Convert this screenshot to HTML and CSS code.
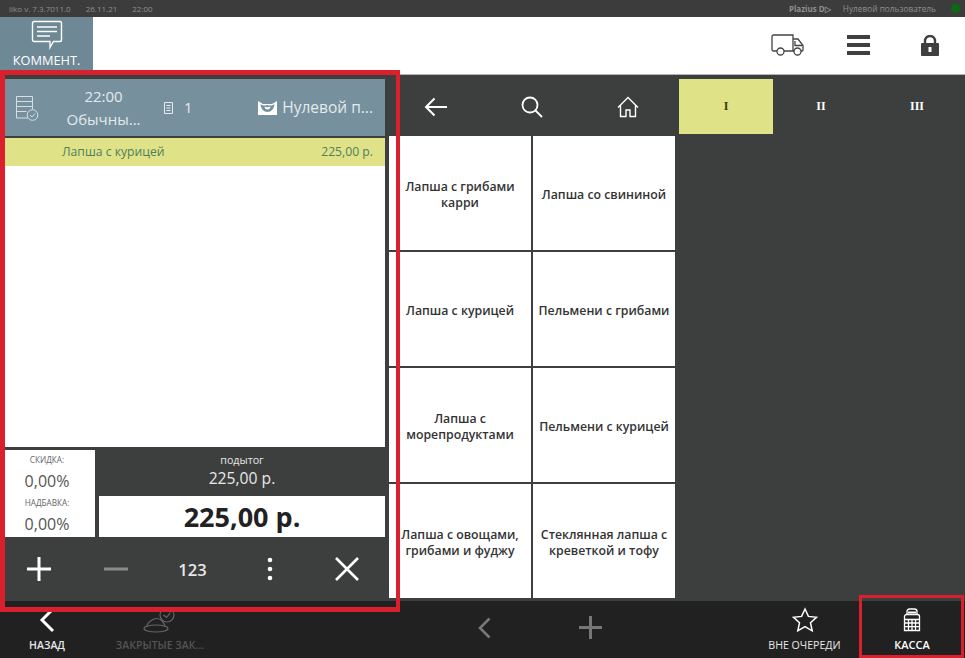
FILE: index.html
```html
<!DOCTYPE html>
<html lang="ru">

<head>
  <meta charset="UTF-8" />
  <title>iiko - заказ</title>
  <link rel="stylesheet" href="styles.css">
</head>

<body>

  <div class="screen">

    <div class="status">
      <div class="status_left">
        <span>iiko v. 7.3.7011.0</span>
        <span>26.11.21</span>
        <span>22:00</span>
      </div>
      <div class="status_right">
        <b>Plazius D&#9655;</b>
        <span>Нулевой пользователь</span>
        <i class="led"></i>
      </div>
    </div>

    <div class="toolbar">
      <div class="comment_btn">
        <svg width="32" height="30" viewBox="0 0 32 30" fill="none" stroke="#fff" stroke-width="1.4">
          <path d="M3 1.500h26a1.500 1.500 0 0 1 1.500 1.500v17a1.500 1.500 0 0 1-1.500 1.500h-6.500l-3.500 6v-6H3A1.500 1.500 0 0 1 1.500 20V3A1.500 1.500 0 0 1 3 1.500z"/>
          <path d="M6 7h20M6 11.500h20M6 16h13"/>
        </svg>
        <span>КОММЕНТ.</span>
      </div>
      <div class="tool_icons">
        <svg class="truck" width="34" height="22" viewBox="0 0 34 22" fill="none" stroke="#444" stroke-width="1.300">
          <path d="M6 17H2.500A1.500 1.500 0 0 1 1 15.500V2.500A1.500 1.500 0 0 1 2.500 1H22v16H13"/>
          <path d="M22 5h5l5 6.500V16a1 1 0 0 1-1 1h-1M22 17h1M24 7v4.500h7"/>
          <circle cx="9.500" cy="17.500" r="3.500"/>
          <circle cx="26.500" cy="17.500" r="3.500"/>
        </svg>
        <svg class="burger" width="23" height="20" viewBox="0 0 23 20" fill="#3f3f3f">
          <rect width="23" height="4"/>
          <rect y="8" width="23" height="4"/>
          <rect y="16" width="23" height="4"/>
        </svg>
        <svg class="lock" width="18" height="21" viewBox="0 0 18 21">
          <path d="M4 9V6a5 5 0 0 1 10 0v3" fill="none" stroke="#3f3f3f" stroke-width="2.400"/>
          <path d="M1 8h16a1 1 0 0 1 1 1v11a1 1 0 0 1-1 1H1a1 1 0 0 1-1-1V9a1 1 0 0 1 1-1z" fill="#3f3f3f"/>
          <path d="M7.500 12h3v5h-3z" fill="#fff"/>
        </svg>
      </div>
    </div>

    <div class="main">

      <div class="order">
        <div class="order_head">
          <svg class="head_icon" width="24" height="26" viewBox="0 0 24 26" fill="none" stroke="#d5dfe4" stroke-width="1">
            <path d="M13 23H1.500V1.500h16V14M1.500 6.500h16M1.500 11.500h16M1.500 16.500h10"/>
            <circle cx="17.500" cy="20" r="5.300"/>
            <path d="M15 20l2 2 3-3.500"/>
          </svg>
          <div class="head_time">22:00<br />Обычны...</div>
          <div class="head_num">
            <svg width="9" height="12" viewBox="0 0 9 12" fill="none" stroke="#e4eaed">
              <path d="M.5.500h8v11h-8zM2.500 3.500h4M2.500 6h4M2.500 8.500h4"/>
            </svg>
            <span>1</span>
          </div>
          <div class="head_user">
            <svg width="19" height="14" viewBox="0 0 19 14" fill="#fff">
              <path d="M0 0l5 3h9l5-3v14H0z"/>
              <path d="M2.500 3c1.500 1.500 4 2 7 1 3 1 5.500.5 7-1-.3 5-3.500 8-7 8s-6.700-3-7-8z" fill="#76909d"/>
              <path d="M6.500 5.800c2 .6 4 .6 6 0-.3 1.800-1.500 2.700-3 2.700s-2.700-.9-3-2.700z"/>
            </svg>
            <span>Нулевой п...</span>
          </div>
        </div>

        <div class="order_row">
          <span>Лапша с курицей</span>
          <span>225,00 р.</span>
        </div>
        <div class="order_blank"></div>

        <div class="totals">
          <div class="discounts">
            <div class="small_label">СКИДКА:</div>
            <div class="percent">0,00%</div>
            <div class="small_label">НАДБАВКА:</div>
            <div class="percent">0,00%</div>
          </div>
          <div class="sums">
            <div class="subtotal">
              <div class="subtotal_label">подытог</div>
              <div class="subtotal_value">225,00 р.</div>
            </div>
            <div class="grand_total">225,00 р.</div>
          </div>
        </div>

        <div class="actions">
          <svg width="24" height="24" viewBox="0 0 24 24" stroke="#fff" stroke-width="3"><path d="M12 0v24M0 12h24"/></svg>
          <svg width="24" height="24" viewBox="0 0 24 24" stroke="#8b8b8b" stroke-width="3"><path d="M0 12h24"/></svg>
          <span class="num_btn">123</span>
          <svg width="24" height="24" viewBox="0 0 24 24" fill="#fff"><circle cx="12" cy="3" r="2.300"/><circle cx="12" cy="12" r="2.300"/><circle cx="12" cy="21" r="2.300"/></svg>
          <svg width="24" height="24" viewBox="0 0 24 24" stroke="#fff" stroke-width="2.600"><path d="M1 1l22 22M23 1L1 23"/></svg>
        </div>
      </div>

      <div class="menu">
        <div class="menu_nav">
          <div class="nav_btn">
            <svg width="24" height="20" viewBox="0 0 24 20" fill="none" stroke="#fff" stroke-width="2"><path d="M23 10H2M10.500 1.500L2 10l8.500 8.500"/></svg>
          </div>
          <div class="nav_btn">
            <svg width="22" height="22" viewBox="0 0 22 22" fill="none" stroke="#fff" stroke-width="1.800"><circle cx="9" cy="9" r="7.500"/><path d="M14.500 14.500L21 21"/></svg>
          </div>
          <div class="nav_btn">
            <svg width="22" height="22" viewBox="0 0 22 22" fill="none" stroke="#fff" stroke-width="1.400"><path d="M1 11.500L11 1.500l10 10M3.500 9.500V20.500h5.500v-6.500h4v6.500h5.500V9.500"/></svg>
          </div>
          <div class="tab tab_active">I</div>
          <div class="tab">II</div>
          <div class="tab">III</div>
        </div>
        <div class="dishes">
          <div class="dish">Лапша с грибами карри</div>
          <div class="dish">Лапша со свининой</div>
          <div class="dish">Лапша с курицей</div>
          <div class="dish">Пельмени с грибами</div>
          <div class="dish">Лапша с морепродуктами</div>
          <div class="dish">Пельмени с курицей</div>
          <div class="dish">Лапша с овощами, грибами и фуджу</div>
          <div class="dish">Стеклянная лапша с креветкой и тофу</div>
        </div>
      </div>

    </div>

    <div class="bottom">
      <div class="bottom_btn">
        <svg class="back_arrow" width="16" height="26" viewBox="0 0 16 26" fill="none" stroke="#fff" stroke-width="3"><path d="M14 2L3 13l11 11"/></svg>
        <span>НАЗАД</span>
      </div>
      <div class="bottom_btn off">
        <svg width="34" height="26" viewBox="0 0 34 26" fill="none" stroke="#666" stroke-width="1.200">
          <ellipse cx="13" cy="21.500" rx="12" ry="3.500"/>
          <path d="M3.500 19.500C5 15 10 11.500 14 11.500c4 0 7 4 8 8"/>
          <circle cx="24" cy="8" r="7"/>
          <path d="M20.500 8l3 2.500 4-5"/>
        </svg>
        <span>ЗАКРЫТЫЕ ЗАК...</span>
      </div>
      <div></div>
      <div class="bottom_btn pager">
        <svg width="14" height="22" viewBox="0 0 14 22" fill="none" stroke="#777" stroke-width="2.600"><path d="M12.500 1.500L3 11l9.500 9.500"/></svg>
      </div>
      <div class="bottom_btn pager">
        <svg width="23" height="23" viewBox="0 0 23 23" stroke="#777" stroke-width="3"><path d="M11.500 0v23M0 11.500h23"/></svg>
      </div>
      <div></div>
      <div class="bottom_btn">
        <svg width="26" height="26" viewBox="0 0 26 26" fill="none" stroke="#fff" stroke-width="1.500"><path d="M13 2l3.400 7.400 8.100.9-6 5.500 1.700 8L13 19.700 5.800 23.800l1.700-8-6-5.500 8.100-.9z"/></svg>
        <span class="queue_label">ВНЕ ОЧЕРЕДИ</span>
      </div>
      <div class="bottom_btn">
        <svg width="18" height="24" viewBox="0 0 18 24" fill="none" stroke="#fff" stroke-width="1.300">
          <path d="M4 7V3.500C4 2 5 1 6.500 1h5C13 1 14 2 14 3.500V7"/>
          <path d="M5 4.500h8" stroke-width="2"/>
          <path d="M1.500 22.500V8.500a2 2 0 0 1 2-2h11a2 2 0 0 1 2 2v14z"/>
          <path d="M1.500 11.500h15M1.500 15h15M1.500 18.700h15M5.500 11.500v11M9 11.500v11M12.500 11.500v11"/>
        </svg>
        <span class="kassa_label">КАССА</span>
      </div>
    </div>

    <div class="mark mark_order"></div>
    <div class="mark mark_kassa"></div>

  </div>

</body>

</html>
```

FILE: styles.css
```css
* {
  box-sizing: border-box;
}

body {
  margin: 0;
  font-family: "Open Sans", "Liberation Sans", sans-serif;
  color: #333333;
  background-color: #3d3e3e;
}

svg {
  display: block;
}

.screen {
  position: relative;
  display: flex;
  flex-direction: column;
  width: 965px;
  height: 658px;
  overflow: hidden;
}

/* status line */
.status {
  display: flex;
  justify-content: space-between;
  align-items: center;
  height: 17px;
  padding: 0 5px 0 9px;
  font-size: 8px;
  color: #8f8f8f;
  background-color: #3c3c3c;
}

.status_left {
  display: flex;
  gap: 15px;
}

.status_right {
  display: flex;
  align-items: center;
  gap: 12px;
}

.status_right span {
  font-size: 8.300px;
}

.led {
  width: 9px;
  height: 9px;
  margin-left: 3px;
  border-radius: 50%;
  background-color: #0b6b12;
}

/* toolbar */
.toolbar {
  display: flex;
  justify-content: space-between;
  height: 58px;
  background-color: #ffffff;
  border-bottom: 1px solid #b5b5b5;
}

.comment_btn {
  display: flex;
  flex-direction: column;
  align-items: center;
  width: 93px;
  padding-top: 3px;
  color: #ffffff;
  font-size: 12.800px;
  line-height: 17px;
  background-color: #6f8896;
}

.comment_btn span {
  margin-top: 2px;
}

.tool_icons {
  display: flex;
  align-items: center;
  padding-bottom: 1px;
}

.truck {
  margin-right: 42px;
}

.burger {
  margin-right: 51px;
}

.lock {
  margin-right: 26px;
}

/* order */
.main {
  display: flex;
  flex: 1;
  min-height: 0;
  padding: 4px 0 0 5px;
  gap: 4px;
  background-color: #3d3e3e;
}

.order {
  display: flex;
  flex-direction: column;
  width: 380px;
}

.order_head {
  display: grid;
  grid-template-columns: 52px 93px 54px 1fr;
  align-items: center;
  height: 57px;
  margin-bottom: 2px;
  color: #e4eaed;
  font-size: 15px;
  line-height: 23px;
  background-color: #76909d;
}

.head_icon {
  margin-left: 10px;
}

.head_time {
  text-align: center;
}

.head_num {
  display: flex;
  align-items: center;
  gap: 11px;
  margin-left: 14px;
}

.head_user {
  display: flex;
  align-items: center;
  justify-content: flex-end;
  gap: 5px;
  padding-right: 12px;
  font-size: 15.500px;
}

.order_row {
  display: flex;
  justify-content: space-between;
  align-items: center;
  height: 28px;
  padding: 0 12px 2px 57px;
  font-size: 12.200px;
  color: #4f7f5f;
  background-color: #dfe286;
}

.order_blank {
  height: 281px;
  background-color: #ffffff;
}

.totals {
  display: flex;
  margin-top: 3px;
  height: 87px;
  gap: 4px;
}

.discounts {
  width: 90px;
  padding-right: 6px;
  text-align: center;
  overflow: hidden;
  background-color: #ffffff;
}

.small_label {
  padding-top: 4px;
  font-size: 8.200px;
  line-height: 11px;
  color: #666666;
}

.percent {
  padding-top: 4px;
  font-size: 16px;
  line-height: 24px;
  color: #555555;
}

.sums {
  display: flex;
  flex: 1;
  flex-direction: column;
}

.subtotal {
  flex: 1;
  padding-top: 4px;
  text-align: center;
  color: #e8e8e8;
}

.subtotal_label {
  font-size: 10.700px;
  line-height: 13px;
}

.subtotal_value {
  font-size: 15.700px;
  line-height: 22px;
}

.grand_total {
  height: 41px;
  line-height: 42px;
  font-size: 27px;
  font-weight: 700;
  text-align: center;
  color: #222222;
  background-color: #ffffff;
}

.actions {
  display: grid;
  grid-template-columns: repeat(5, 77px);
  justify-items: center;
  align-items: center;
  height: 64px;
  margin-left: -5px;
}

.num_btn {
  font-size: 16.500px;
  font-weight: 600;
  color: #e8e8e8;
}

/* menu */
.menu {
  flex: 1;
}

.menu_nav {
  display: grid;
  grid-template-columns: 93px 100px 92px 99px 96px 96px;
  height: 57px;
}

.nav_btn {
  display: flex;
  justify-content: center;
  align-items: center;
  height: 55px;
}

.tab {
  display: flex;
  justify-content: center;
  align-items: center;
  height: 55px;
  font-family: "Liberation Serif", serif;
  font-size: 12px;
  font-weight: 700;
  color: #ffffff;
}

.tab_active {
  margin-left: 5px;
  color: #3d3e10;
  background-color: #dfe286;
}

.dishes {
  display: grid;
  grid-template-columns: 142px 142px;
  grid-auto-rows: 114px;
  gap: 2px;
}

.dish {
  display: flex;
  justify-content: center;
  align-items: center;
  padding: 4px 4px 0;
  font-size: 12.300px;
  font-weight: 600;
  line-height: 16px;
  text-align: center;
  background-color: #ffffff;
}

/* bottom bar */
.bottom {
  display: grid;
  grid-template-columns: 94px 132px 204px 107px 107px 1fr 109px 106px;
  height: 57px;
  background-color: #212121;
}

.bottom_btn {
  display: flex;
  flex-direction: column;
  justify-content: flex-end;
  align-items: center;
  gap: 5px;
  padding-bottom: 6px;
  font-size: 10.500px;
  font-weight: 600;
  color: #e8e8e8;
}

.off {
  color: #555555;
}

.pager {
  justify-content: center;
  padding-bottom: 4px;
}

.queue_label {
  font-size: 10.600px;
  font-weight: 400;
}

.kassa_label {
  font-size: 11px;
  color: #ffffff;
}

/* red marks put over the shot */
.mark {
  position: absolute;
  border: solid #d9202c;
}

.mark_order {
  left: 0;
  top: 70px;
  width: 400px;
  height: 542px;
  border-width: 5px 4px 5px 5px;
}

.mark_kassa {
  left: 859px;
  top: 595px;
  width: 105px;
  height: 63px;
  border-width: 3px;
}
```
